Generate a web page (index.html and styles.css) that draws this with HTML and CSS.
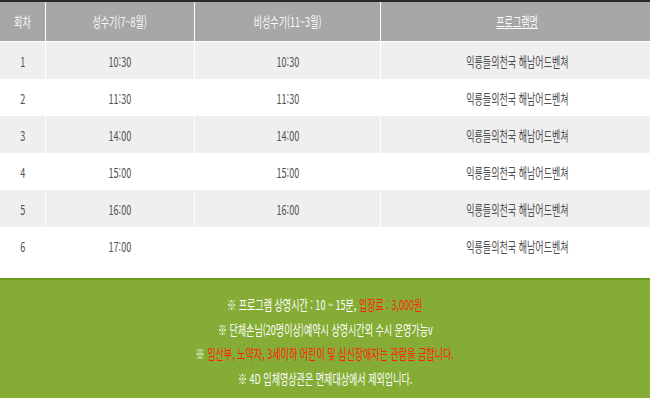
FILE: index.html
```html
<!DOCTYPE html>
<html lang="ko">
<head>
<meta charset="utf-8">
<link rel="stylesheet" href="styles.css">
</head>
<body>
<div class="page">
  <table class="schedule">
    <thead>
      <tr>
        <th class="c1"><span class="t">회차</span></th>
        <th class="c2"><span class="t">성수기(7~8월)</span></th>
        <th class="c3"><span class="t">비성수기(11~3월)</span></th>
        <th class="c4"><span class="t u">프로그램명</span></th>
      </tr>
    </thead>
    <tbody>
      <tr class="odd"><td><span class="t">1</span></td><td><span class="t">10:30</span></td><td><span class="t">10:30</span></td><td><span class="t">익룡들의천국 해남어드벤쳐</span></td></tr>
      <tr><td><span class="t">2</span></td><td><span class="t">11:30</span></td><td><span class="t">11:30</span></td><td><span class="t">익룡들의천국 해남어드벤쳐</span></td></tr>
      <tr class="odd"><td><span class="t">3</span></td><td><span class="t">14:00</span></td><td><span class="t">14:00</span></td><td><span class="t">익룡들의천국 해남어드벤쳐</span></td></tr>
      <tr><td><span class="t">4</span></td><td><span class="t">15:00</span></td><td><span class="t">15:00</span></td><td><span class="t">익룡들의천국 해남어드벤쳐</span></td></tr>
      <tr class="odd"><td><span class="t">5</span></td><td><span class="t">16:00</span></td><td><span class="t">16:00</span></td><td><span class="t">익룡들의천국 해남어드벤쳐</span></td></tr>
      <tr><td><span class="t">6</span></td><td><span class="t">17:00</span></td><td></td><td><span class="t">익룡들의천국 해남어드벤쳐</span></td></tr>
    </tbody>
  </table>
  <div class="notice">
    <p><span class="t">※ 프로그램 상영시간 : 10 ~ 15분, <em class="red">입장료 : 3,000원</em></span></p>
    <p><span class="t">※ 단체손님(20명이상)예약시 상영시간외 수시 운영가능v</span></p>
    <p><span class="t">※ <em class="red">임산부, 노약자, 3세이하 어린이 및 심신장애자는 관람을 금합니다.</em></span></p>
    <p><span class="t">※ 4D 입체영상관은 면제대상에서 제외입니다.</span></p>
  </div>
</div>
</body>
</html>
```
FILE: styles.css
```css
html, body {
  margin: 0;
  padding: 0;
  background: #fff;
}
body {
  font-family: "Noto Sans CJK KR", "Noto Sans", sans-serif;
  font-size: 13.5px;
  color: #505050;
}
.page {
  width: 650px;
  height: 399px;
  overflow: hidden;
}
.t {
  display: inline-block;
  transform: scaleX(0.67);
  white-space: nowrap;
}
.u {
  text-decoration: underline;
}
.schedule {
  width: 650px;
  border-collapse: collapse;
  border-top: 2px solid #2a2a2a;
  table-layout: fixed;
}
.schedule .c1 { width: 45px; }
.schedule .c2 { width: 148px; }
.schedule .c3 { width: 185px; }
.schedule .c4 { width: 272px; }
.schedule th {
  height: 38px;
  padding: 0 0 1px;
  background: #a7a7a7;
  color: #fafafa;
  font-weight: normal;
  border-bottom: 1px solid #fff;
  border-left: 1px solid #fff;
  text-align: center;
  line-height: 16px;
}
.schedule th:first-child,
.schedule td:first-child {
  border-left: none;
}
.schedule td {
  height: 37px;
  padding: 0;
  text-align: center;
  border-left: 1px solid #fff;
  line-height: 16px;
}
.schedule tr.odd td {
  background: #efefef;
}
.notice {
  margin-top: 14px;
  border-top: 2px solid #6c9d1c;
  background: #85ad36;
  height: 120px;
  padding-top: 12px;
  box-sizing: border-box;
  color: #fff;
  text-align: center;
}
.notice p {
  margin: 0;
  height: 24.5px;
  line-height: 24.5px;
}
.red {
  font-style: normal;
  color: #ff2010;
}
```
